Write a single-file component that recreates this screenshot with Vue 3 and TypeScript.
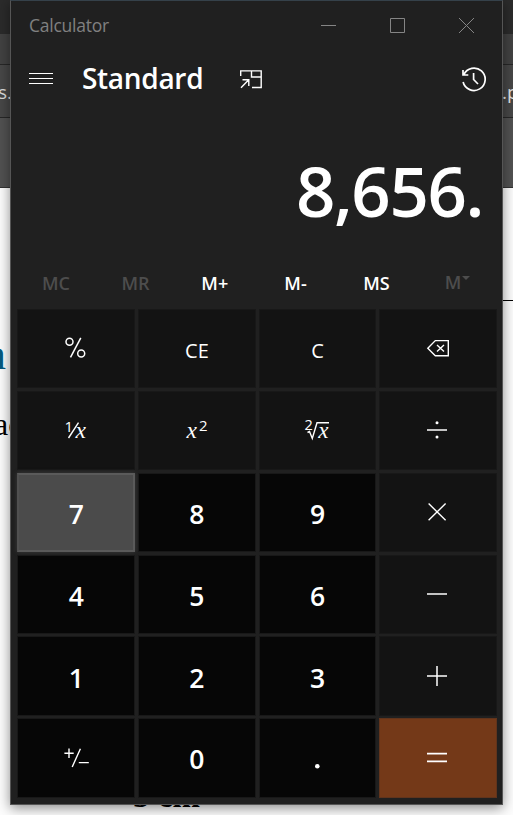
<script setup lang="ts">
type Kind = 'digit' | 'func' | 'equals' | 'hover'
interface Key { id: string; kind: Kind; text?: string }

const memory: { label: string; off: boolean }[] = [
  { label: 'MC', off: true },
  { label: 'MR', off: true },
  { label: 'M+', off: false },
  { label: 'M-', off: false },
  { label: 'MS', off: false },
]

const keys: Key[] = [
  { id: 'percent', kind: 'func' },
  { id: 'ce', kind: 'func', text: 'CE' },
  { id: 'c', kind: 'func', text: 'C' },
  { id: 'back', kind: 'func' },
  { id: 'inverse', kind: 'func' },
  { id: 'square', kind: 'func' },
  { id: 'root', kind: 'func' },
  { id: 'divide', kind: 'func' },
  { id: '7', kind: 'hover', text: '7' },
  { id: '8', kind: 'digit', text: '8' },
  { id: '9', kind: 'digit', text: '9' },
  { id: 'times', kind: 'func' },
  { id: '4', kind: 'digit', text: '4' },
  { id: '5', kind: 'digit', text: '5' },
  { id: '6', kind: 'digit', text: '6' },
  { id: 'minus', kind: 'func' },
  { id: '1', kind: 'digit', text: '1' },
  { id: '2', kind: 'digit', text: '2' },
  { id: '3', kind: 'digit', text: '3' },
  { id: 'plus', kind: 'func' },
  { id: 'sign', kind: 'digit' },
  { id: '0', kind: 'digit', text: '0' },
  { id: 'point', kind: 'digit' },
  { id: 'equals', kind: 'equals' },
]
</script>

<template>
  <div class="desktop">
    <div class="browser">
      <div class="tabs"></div>
      <div class="toolbar"></div>
      <div class="bookmarks"></div>
      <div class="banner"></div>
      <div class="page"></div>
      <span class="frag frag-s">s.</span>
      <span class="frag frag-p">.p</span>
      <span class="frag frag-n">n</span>
      <span class="frag frag-ac">ac</span>
      <span class="frag frag-cm">5 cm</span>
      <span class="frag rule"></span>
    </div>

    <main class="window">
      <header class="titlebar">
        <span class="title">Calculator</span>
        <svg class="controls" width="156" height="17" viewBox="0 0 156 17" fill="none" stroke="#858585">
          <path d="M0 8.5H15M69.5 1.5H83.5V15.5H69.5Z" />
          <path d="M138 1L153 16M153 1L138 16" />
        </svg>
      </header>

      <nav class="modebar">
        <svg class="burger" width="24" height="12" viewBox="0 0 24 12" stroke="#fff">
          <path d="M0 .5H24M0 5.5H24M0 10.5H24" />
        </svg>
        <h1>Standard</h1>
        <svg class="ontop" width="22" height="19" viewBox="0 0 22 19" fill="none" stroke="#fff" stroke-width="1.4">
          <path d="M.7 6V.9H21.2V17.5H12M11.5 .9V7H21.2M1 17.7L8.5 10M2.5 9.7H8.8V16" />
        </svg>
        <svg class="history" width="26" height="26" viewBox="0 0 26 26" fill="none" stroke="#fff" stroke-width="1.7">
          <path d="M2.8 8.6A11.2 11.2 0 1 1 2.1 16M2 4V9H7.3M12.6 7V13.5L17 18" />
        </svg>
      </nav>

      <output class="display">8,656.</output>

      <div class="memory">
        <span v-for="m in memory" :key="m.label" :class="{ off: m.off }">{{ m.label }}</span>
        <span class="off list">M<svg width="8" height="4" viewBox="0 0 8 4"><path d="M0 0H8L4 4Z" fill="#4d4d4d" /></svg></span>
      </div>

      <section class="keys">
        <button v-for="k in keys" :key="k.id" :class="['key', k.kind]" type="button">
          <span v-if="k.text">{{ k.text }}</span>
          <svg v-else width="118" height="79" viewBox="0 0 118 79" fill="none" stroke="#fff" stroke-width="1.4">
            <g v-if="k.id === 'percent'" stroke-width="1.5">
              <circle cx="52.5" cy="32.7" r="3.5" /><circle cx="64.2" cy="44.5" r="3.5" /><path d="M63.8 28.8L53.5 48.3" />
            </g>
            <path v-else-if="k.id === 'back'" d="M48.8 39.2L56.3 31.6H69.3V46.8H56.3ZM58 36L65 42.5M65 36L58 42.5" />
            <g v-else-if="k.id === 'inverse'">
              <text class="small" x="47.5" y="40.5" font-size="15">1</text>
              <path d="M61.5 31.7L51.5 47" />
              <text class="var" x="58.5" y="47" font-size="23.5">x</text>
            </g>
            <g v-else-if="k.id === 'square'">
              <text class="var" x="48.5" y="47" font-size="23.5">x</text>
              <text class="small" x="61" y="40" font-size="15">2</text>
            </g>
            <g v-else-if="k.id === 'root'">
              <text class="small" x="46.5" y="39" font-size="14.5">2</text>
              <path d="M49.5 41.5L51.5 40.5L54.3 47.5L59 31.8H71" />
              <text class="var" x="60.2" y="47" font-size="23">x</text>
            </g>
            <g v-else-if="k.id === 'divide'">
              <path d="M48 39H68" stroke-width="1.5" /><circle cx="58" cy="31.7" r="1.5" fill="#fff" stroke="none" /><circle cx="58" cy="46" r="1.5" fill="#fff" stroke="none" />
            </g>
            <path v-else-if="k.id === 'times'" d="M49.6 30.5L66.6 47.3M66.6 30.5L49.6 47.3" />
            <path v-else-if="k.id === 'minus'" d="M48 39H68" stroke-width="1.5" />
            <path v-else-if="k.id === 'plus'" d="M48 39H68M58 29V49" stroke-width="1.5" />
            <path v-else-if="k.id === 'sign'" d="M47.4 35.2H56.7M52 30.5V40M63.4 30.7L55.2 49M61.8 44.6H71.8" />
            <circle v-else-if="k.id === 'point'" cx="59.3" cy="48.3" r="2.3" fill="#fff" stroke="none" />
            <path v-else-if="k.id === 'equals'" d="M48 35.6H68M48 43.4H68" stroke-width="1.6" />
          </svg>
        </button>
      </section>
    </main>
  </div>
</template>

<style>
body { overflow: hidden; background: #fdfdfd; }
</style>

<style scoped>
.desktop {
  position: relative;
  width: 513px;
  height: 815px;
  overflow: hidden;
  box-sizing: border-box;
  padding: 0 10px;
  font-family: "Open Sans", "Noto Sans", sans-serif;
}
.browser { position: absolute; inset: 0; display: flex; flex-direction: column; }
.tabs { height: 34px; background: #2b2b2b; }
.toolbar { height: 30px; background: #424242; border-bottom: 1px solid #272727; }
.bookmarks { height: 52px; background: #474747; border-bottom: 1px solid #272727; }
.banner { height: 69px; background: #525252; border-bottom: 1px solid #333; }
.page { flex: 1; background: #fdfdfd; }
.frag { position: absolute; white-space: nowrap; line-height: 1; }
.frag-s { left: -2px; top: 83px; font-size: 19px; color: #ddd; }
.frag-p { left: 502px; top: 83px; font-size: 19px; color: #e4e4e4; }
.frag-n { left: -16px; top: 333px; font: 44px/1 "Liberation Serif", serif; color: #075a80; }
.frag-ac { left: -6px; top: 408px; font: 32px/1 "Liberation Serif", serif; color: #000; }
.frag-cm { left: 133px; top: 780px; font: bold 33px/1 "Liberation Serif", serif; color: #000; }
.rule { left: 502px; top: 300px; width: 11px; height: 1px; background: #000; }

.window {
  position: relative;
  width: 493px;
  height: 805px;
  box-sizing: border-box;
  border: 1px solid #555;
  border-top-color: #35414a;
  background: #202020;
  box-shadow: 0 3px 12px rgba(0, 0, 0, 0.45);
  display: flex;
  flex-direction: column;
}
.titlebar { display: flex; align-items: center; height: 49px; padding-left: 18px; box-sizing: border-box; }
.title { font-size: 17.5px; line-height: 24px; letter-spacing: -0.25px; margin-top: -1px; color: #808080; }
.controls { margin-left: auto; margin-right: 25px; }
.modebar { display: flex; align-items: center; height: 58px; padding: 0 15px 0 18px; box-sizing: border-box; }
h1 { margin: -2px 0 0 29px; width: 158px; font-size: 28px; line-height: 40px; font-weight: 600; letter-spacing: -0.3px; color: #fff; }
.history { margin-left: auto; }
.display {
  height: 148px;
  padding-right: 19px;
  font-size: 69px;
  font-weight: 600;
  line-height: 165px;
  letter-spacing: -1.4px;
  text-align: right;
  color: #fff;
}
.memory { display: grid; grid-template-columns: 80px 79px 79.5px 82px 80px 82px; height: 53px; padding-left: 5px; font-size: 18px; font-weight: 600; line-height: 54px; color: #fff; text-align: center; }
.off { color: #4d4d4d; }
.list { display: flex; justify-content: center; line-height: 52px; }
.list svg { margin: 20px 0 0 1px; }
.keys {
  display: grid;
  grid-template-columns: repeat(4, 1fr);
  grid-template-rows: repeat(6, 1fr);
  gap: 2.7px;
  height: 488.5px;
  margin: 0 5px 0 6.4px;
}
.key {
  display: flex;
  align-items: center;
  justify-content: center;
  min-width: 0;
  min-height: 0;
  padding: 0;
  border: 1px solid #181818;
  overflow: hidden;
  font-family: inherit;
  color: #fff;
}
.key > svg { flex: none; }
.func { background: #131313; font-size: 20px; }
.digit, .hover { background: #060606; font-size: 26.5px; font-weight: 600; }
.digit span, .hover span, .func span { padding-top: 3px; }
.hover { background: #4b4b4b; border: 2px solid #5a5a5a; border-left-color: #505050; box-shadow: 0 0 4px #3a3a3a; }
.equals { background: #743918; border-color: #61341c; }
.small { font-family: "Open Sans", sans-serif; fill: #fff; stroke: none; }
.var { font-family: "Liberation Serif", serif; font-style: italic; fill: #fff; stroke: none; }
</style>
